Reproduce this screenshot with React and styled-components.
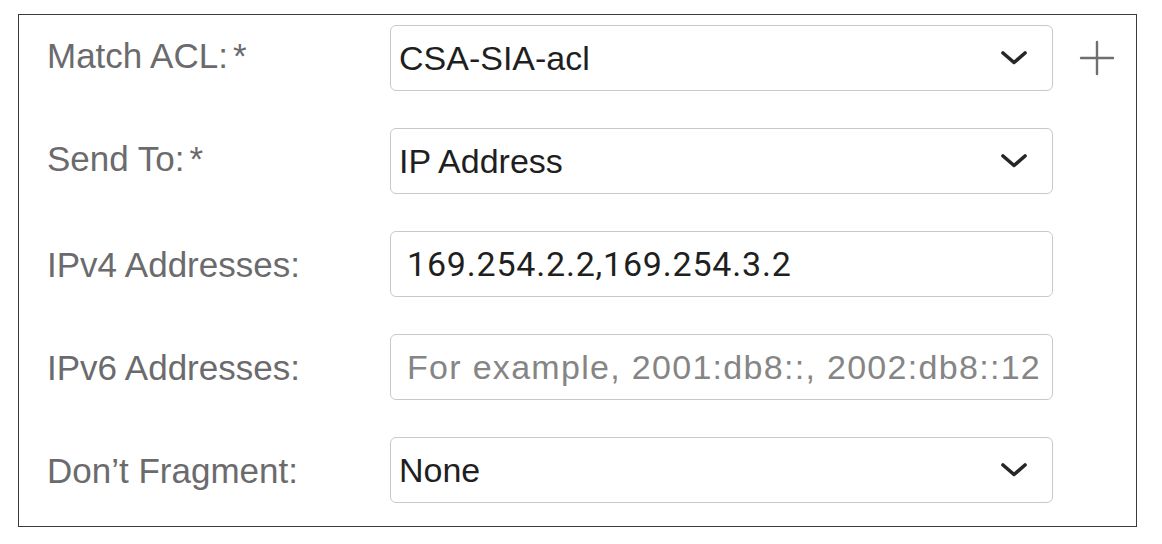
import React from 'react';
import styled, { createGlobalStyle } from 'styled-components';

const GlobalStyle = createGlobalStyle`
  html, body {
    margin: 0;
    padding: 0;
    background: #ffffff;
  }
  body {
    font-family: "Liberation Sans", Arial, sans-serif;
  }
`;

const Frame = styled.div`
  box-sizing: border-box;
  margin: 14px 0 0 18px;
  width: 1119px;
  height: 513px;
  border: 1.5px solid #3a3a3a;
  padding: 10px 0 0 28px;
`;

const Grid = styled.div`
  display: grid;
  grid-template-columns: 343px 663px 84px;
  row-gap: 37px;
  align-items: center;
`;

const Label = styled.div`
  font-size: 35px;
  color: #6b6b6d;
  line-height: 1;
  padding-bottom: ${p => (p.$raise ? '6px' : '0')};
`;

const Star = styled.span`
  margin-left: 5px;
`;

const Field = styled.div`
  box-sizing: border-box;
  height: 66px;
  border: 1.5px solid #c9c9c9;
  border-radius: 6px;
  display: flex;
  align-items: center;
  padding: 0 ${p => (p.$select ? '24px' : '12px')} 0 ${p => (p.$select ? '8px' : '16px')};
  background: #fff;
`;

const Value = styled.span`
  flex: 1;
  font-family: ${p => (p.$roboto ? 'Roboto, "Liberation Sans", sans-serif' : '"Liberation Sans", Arial, sans-serif')};
  font-size: 34px;
  color: ${p => (p.$placeholder ? '#858585' : '#1f1f1f')};
  white-space: nowrap;
  overflow: hidden;
  letter-spacing: ${p => (p.$roboto ? '0.8px' : p.$placeholder ? '1.3px' : '0')};
`;

const Extra = styled.div`
  display: flex;
  justify-content: center;
  padding-left: 4px;
`;

const Chevron = () => (
  <svg width="28" height="16" viewBox="0 0 28 16" fill="none">
    <polyline points="3,3 14,12.5 25,3" stroke="#262626" strokeWidth="3.6" strokeLinecap="round" strokeLinejoin="round" />
  </svg>
);

const Plus = () => (
  <svg width="36" height="36" viewBox="0 0 36 36" fill="none">
    <line x1="18" y1="2" x2="18" y2="34" stroke="#6f6f6f" strokeWidth="2.4" strokeLinecap="round" />
    <line x1="2" y1="18" x2="34" y2="18" stroke="#6f6f6f" strokeWidth="2.4" strokeLinecap="round" />
  </svg>
);

const rows = [
  { label: 'Match ACL:', required: true, value: 'CSA-SIA-acl', select: true, plus: true },
  { label: 'Send To:', required: true, value: 'IP Address', select: true },
  { label: 'IPv4 Addresses:', value: '169.254.2.2,169.254.3.2', roboto: true },
  { label: 'IPv6 Addresses:', value: 'For example, 2001:db8::, 2002:db8::12', placeholder: true },
  { label: 'Don\u2019t Fragment:', value: 'None', select: true },
];

const App = () => (
  <>
    <GlobalStyle />
    <Frame>
      <Grid>
        {rows.map(r => (
          <React.Fragment key={r.label}>
            <Label $raise={r.required}>
              {r.label}
              {r.required && <Star>*</Star>}
            </Label>
            <Field $select={r.select}>
              <Value $roboto={r.roboto} $placeholder={r.placeholder}>{r.value}</Value>
              {r.select && <Chevron />}
            </Field>
            <Extra>{r.plus && <Plus />}</Extra>
          </React.Fragment>
        ))}
      </Grid>
    </Frame>
  </>
);

export default App;
